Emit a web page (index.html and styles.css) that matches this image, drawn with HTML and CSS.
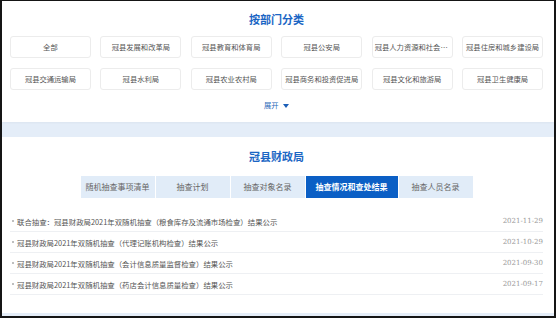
FILE: index.html
```html
<!DOCTYPE html>
<html lang="zh-CN">
<head>
    <meta charset="UTF-8">
    <meta name="viewport" content="width=device-width, initial-scale=1.0">
    <title>冠县财政局 - 双随机抽查</title>
    <link rel="stylesheet" href="styles.css">
</head>
<body>
    <div class="card dept-card">
        <h2 class="card-title">按部门分类</h2>
        <div class="dept-grid">
            <a class="dept-btn">全部</a>
            <a class="dept-btn">冠县发展和改革局</a>
            <a class="dept-btn">冠县教育和体育局</a>
            <a class="dept-btn">冠县公安局</a>
            <a class="dept-btn">冠县人力资源和社会保障局</a>
            <a class="dept-btn">冠县住房和城乡建设局</a>
            <a class="dept-btn">冠县交通运输局</a>
            <a class="dept-btn">冠县水利局</a>
            <a class="dept-btn">冠县农业农村局</a>
            <a class="dept-btn">冠县商务和投资促进局</a>
            <a class="dept-btn">冠县文化和旅游局</a>
            <a class="dept-btn">冠县卫生健康局</a>
        </div>
        <div class="expand">展开 <span class="arrow"></span></div>
    </div>

    <div class="card result-card">
        <h2 class="card-title">冠县财政局</h2>
        <div class="tabs">
            <a class="tab">随机抽查事项清单</a>
            <a class="tab">抽查计划</a>
            <a class="tab">抽查对象名录</a>
            <a class="tab tab-wide active">抽查情况和查处结果</a>
            <a class="tab">抽查人员名录</a>
        </div>
        <ul class="news-list">
            <li><span class="news-title">联合抽查：冠县财政局2021年双随机抽查（粮食库存及流通市场检查）结果公示</span><span class="news-date">2021-11-29</span></li>
            <li><span class="news-title">冠县财政局2021年双随机抽查（代理记账机构检查）结果公示</span><span class="news-date">2021-10-29</span></li>
            <li><span class="news-title">冠县财政局2021年双随机抽查（会计信息质量监督检查）结果公示</span><span class="news-date">2021-09-30</span></li>
            <li><span class="news-title">冠县财政局2021年双随机抽查（药店会计信息质量检查）结果公示</span><span class="news-date">2021-09-17</span></li>
        </ul>
    </div>
</body>
</html>
```

FILE: styles.css
```css
* { box-sizing: border-box; }
html, body { margin: 0; padding: 0; }
body {
    height: 318px;
    overflow: hidden;
    background: #e4edf8;
    border-style: solid;
    border-color: #151515;
    border-width: 1px 2px 2px 2px;
    font-family: "Noto Sans CJK SC", "Noto Sans", sans-serif;
    color: #555;
}
a { text-decoration: none; color: inherit; cursor: pointer; }

.card { background: #fff; }
.dept-card { height: 121px; padding: 11px 11px 0 8px; box-shadow: 0 1px 2px rgba(0,0,0,0.04); }
.result-card { margin-top: 15px; height: 176px; padding: 12px 11px 0 8px; }

.card-title { margin: 0; text-align: center; font-size: 11px; line-height: 14px; font-weight: bold; color: #1b66c4; }

.dept-grid { margin-top: 10px; display: grid; grid-template-columns: repeat(6, minmax(0, 1fr)); column-gap: 9.6px; row-gap: 10px; }
.dept-btn {
    height: 22px; line-height: 20px; padding: 0 2px;
    border: 1px solid #ececec; border-radius: 3px;
    text-align: center; font-size: 7.3px; color: #555;
    white-space: nowrap; overflow: hidden; text-overflow: ellipsis;
}

.expand { margin-top: 9px; text-align: center; font-size: 7.3px; line-height: 12px; color: #2b68b8; }
.arrow { display: inline-block; margin-left: 3px; vertical-align: middle; width: 0; height: 0; border-left: 3px solid transparent; border-right: 3px solid transparent; border-top: 4px solid #1b5fb8; }

.tabs { margin-top: 13px; display: flex; justify-content: center; gap: 1px; }
.tab { width: 74px; height: 22px; line-height: 22px; text-align: center; font-size: 8px; background: #e1ecf8; color: #666; white-space: nowrap; }
.tab-wide { width: 92px; }
.tab.active { background: #0b5fc5; color: #fff; font-weight: bold; }

.news-list { list-style: none; margin: 13px 0 0 0; padding: 0; }
.news-list li { display: flex; justify-content: space-between; align-items: center; height: 21px; border-bottom: 1px solid #eef0f3; font-size: 7.4px; }
.news-title { position: relative; padding-left: 7px; color: #555; }
.news-title::before { content: ""; position: absolute; left: 2px; top: 50%; width: 2px; height: 2px; margin-top: -1px; border-radius: 50%; background: #aaa; }
.news-date { color: #999; font-family: "DejaVu Serif", serif; font-size: 7px; }
```
